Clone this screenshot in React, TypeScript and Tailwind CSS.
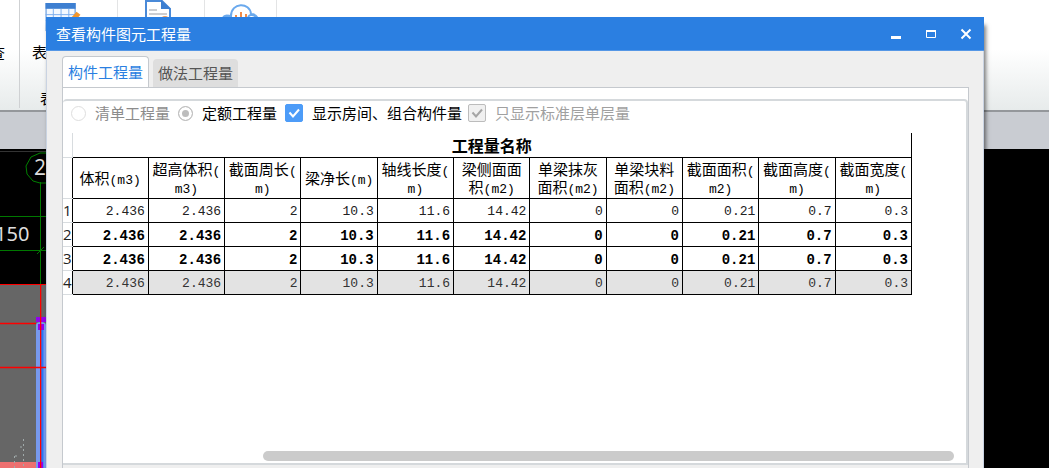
import { useState } from 'react'

const columns = [
  { lines: [['体积', '(m3)']], value: '2.436' },
  { lines: [['超高体积', '('], ['', 'm3)']], value: '2.436' },
  { lines: [['截面周长', '('], ['', 'm)']], value: '2' },
  { lines: [['梁净长', '(m)']], value: '10.3' },
  { lines: [['轴线长度', '('], ['', 'm)']], value: '11.6' },
  { lines: [['梁侧面面', ''], ['积', '(m2)']], value: '14.42' },
  { lines: [['单梁抹灰', ''], ['面积', '(m2)']], value: '0' },
  { lines: [['单梁块料', ''], ['面积', '(m2)']], value: '0' },
  { lines: [['截面面积', '('], ['', 'm2)']], value: '0.21' },
  { lines: [['截面高度', '('], ['', 'm)']], value: '0.7' },
  { lines: [['截面宽度', '('], ['', 'm)']], value: '0.3' },
]

const rows = [
  { id: 1, className: "text-[13px] text-[#222]" },
  { id: 2, className: "text-sm font-bold text-black" },
  { id: 3, className: "text-sm font-bold text-black" },
  { id: 4, className: "bg-[#e3e3e3] text-[13px] text-[#333]" },
]

function Ribbon() {
  return (
    <header className="relative h-28 overflow-hidden border-b-2 border-[#94979b] bg-linear-to-b from-white from-45% to-[#e7ebeb] text-[15px] leading-5 text-black">
      <div className="flex h-27 items-stretch">
        <div className="flex w-5 shrink-0 justify-end border-r border-[#cfd1d3] pt-[43px] pr-3.5">查</div>
        <div className="flex w-[98px] shrink-0 flex-col border-r border-[#e3e4e5] pl-3">
          <svg className="mt-[3px] ml-[13px] h-8 w-9" viewBox="0 0 36 32" fill="none">
            <rect x="0.5" y="0.5" width="30" height="28" fill="#f4f9ff" stroke="#4a8ad8" />
            <path d="M0 0h31v6H0z" fill="#3d7fd1" />
            <path d="M0 12h31M0 18h31M8 6v22M16 6v22M24 6v22" stroke="#7db0ee" />
            <path d="M22 20l10-11 4 3-9 11z" fill="#f0962e" />
          </svg>
          <span className="mt-2">表</span>
          <span className="mt-[26px] ml-2">表</span>
        </div>
        <div className="w-[87px] shrink-0 border-r border-[#e3e4e5] pl-[27px]">
          <svg className="h-8 w-7" viewBox="0 0 28 32" fill="none">
            <path d="M1 1h16l8 8v22H1z" fill="#fff" stroke="#4a8ad8" strokeWidth="2" />
            <path d="M16 0l10 9H16z" fill="#3d7fd1" />
            <path d="M4 10h8M4 14h18M4 18h10" stroke="#9a9da3" />
            <circle cx="20" cy="20" r="4" fill="#f29b55" />
          </svg>
        </div>
        <div className="w-[72px] shrink-0 border-r border-[#e3e4e5] pl-4">
          <svg className="mt-1 h-7 w-10" viewBox="0 0 40 28" fill="none">
            <path d="M10 12C10-2 29-2 30 10c6 0 9 6 7 12H2C0 14 4 11 10 12z" stroke="#6aa9ed" strokeWidth="2" />
            <path d="M2 13c4-3 9-1 10 4M27 13c2-3 6-2 8 0" stroke="#6aa9ed" strokeWidth="2" />
            <path d="M15 11v12M20 8v15M25 10v13" stroke="#f18b48" strokeWidth="2" />
          </svg>
        </div>
      </div>
    </header>
  )
}

function Drawing() {
  return (
    <svg className="block h-[319px] w-[46px]" viewBox="0 149 46 319" fill="none">
      <path d="M0 285h46v183H0z" fill="#666" />
      <path d="M0 151.5h46" stroke="#333" />
      <path d="M0 216.5h46M0 250.5h46M40.5 182v102M37 254l7-7" stroke="#007800" />
      <path d="M46 153h-6l-9 4-5 9 1 8 6 7 7 2h6" stroke="#008000" />
      <text x="34" y="175" fill="#ddd" fontSize="21" fontFamily="'Open Sans', sans-serif">2</text>
      <text x="-5" y="241" fill="#ddd" fontSize="20" fontFamily="'Noto Sans', sans-serif">150</text>
      <path d="M0 462h46v6H0z" fill="#ee7070" />
      <path d="M36 468V325q0-3 5-3t5 3v143z" fill="#7799ed" />
      <path d="M42 324v144" stroke="#2878f8" strokeWidth="3" />
      <path d="M36 317h10v5H36zM38 324h6v6h-6zM38 462h5v6h-5z" fill="#9500f0" />
      <path d="M0 284h46v1H0zM0 322.7h36v1.5H0zM0 366.7h46v1.5H0zM40 285h1.3v183H40z" fill="#ff0000" />
      <path d="M14.5 456v12M23.5 439v29M20 447h3M17 456h-3" stroke="#a0aaaa" strokeDasharray="2 3" />
    </svg>
  )
}

function Radio({ label, checked, onChange }: { label: string; checked: boolean; onChange?: () => void }) {
  return (
    <label className={checked ? "flex items-center gap-[9px] text-black" : "flex items-center gap-[9px] text-[#8c8c8c]"}>
      <input
        type="radio"
        name="quantity"
        checked={checked}
        onChange={onChange}
        className="size-[15px] appearance-none rounded-full border border-[#dedede] bg-white checked:border-[#bdbdbd] checked:bg-[#bdbdbd] checked:shadow-[inset_0_0_0_3px_#fff]"
      />
      {label}
    </label>
  )
}

function Check({ label, disabled }: { label: string; disabled?: boolean }) {
  return (
    <label className={disabled ? "flex items-center gap-[9px] text-[#a0a0a0]" : "flex items-center gap-[9px] text-black"}>
      <span className="relative flex">
        <input
          type="checkbox"
          defaultChecked
          disabled={disabled}
          className="peer size-[18px] appearance-none rounded-xs border border-[#4d9cf8] bg-white checked:bg-[#4d9cf8] disabled:border-[#bcbcbc] disabled:bg-[#f0f0f0]"
        />
        <svg className="pointer-events-none absolute inset-0 hidden text-white peer-checked:block peer-disabled:text-[#a5a5a5]" viewBox="0 0 18 18" fill="none">
          <path d="M4.5 8.5l3.5 4 6-7" stroke="currentColor" strokeWidth="2" />
        </svg>
      </span>
      {label}
    </label>
  )
}

function QuantityTable() {
  return (
    <table className="w-full table-fixed border-collapse text-black">
      <colgroup>
        <col className="w-[9px]" />
        {columns.map((_, i) => <col key={i} />)}
      </colgroup>
      <thead>
        <tr className="h-6">
          <td className="border-r border-b border-[#d8dcdf]"></td>
          <th colSpan={11} className="border-r border-b border-black p-0 text-base leading-5 font-bold">工程量名称</th>
        </tr>
        <tr className="h-[41px]">
          <td className="border-r border-b border-r-black border-b-[#d8dcdf]"></td>
          {columns.map((col, i) => (
            <th key={i} className="border border-black p-0 text-[15px] leading-[18px] font-normal">
              {col.lines.map(([name, unit], j) => (
                <div key={j} className="whitespace-nowrap">
                  {name}
                  <span className="font-['Liberation_Mono',monospace] text-[13px] leading-none">{unit}</span>
                </div>
              ))}
            </th>
          ))}
        </tr>
      </thead>
      <tbody>
        {rows.map(row => (
          <tr key={row.id} className={row.className + " h-6"}>
            <th className="border-b border-[#d8dcdf] bg-white p-0 text-left font-['Open_Sans',sans-serif] text-[15px] leading-5 font-normal text-[#222]">{row.id}</th>
            {columns.map((col, i) => (
              <td key={i} className="border border-black pt-1 pr-[3px] pb-0 pl-0 text-right font-['Liberation_Mono',monospace] leading-4">{col.value}</td>
            ))}
          </tr>
        ))}
      </tbody>
    </table>
  )
}

export default function App() {
  const [tab, setTab] = useState(0)
  const [mode, setMode] = useState(1)
  const active = "-mb-px h-8 rounded-t border border-b-0 border-[#c5c9ce] bg-white px-[5px] pb-px text-[#2b7fe1]"
  const inactive = "h-7 rounded-t bg-[#dedede] px-[5px] text-[#555]"
  return (
    <div className="relative flex min-h-screen flex-col overflow-hidden bg-black font-['Noto_Sans_CJK_SC',sans-serif]">
      <Ribbon />
      <div className="h-[37px] bg-[#c9ccd2]"></div>
      <Drawing />

      <section className="absolute top-[17px] right-[65px] bottom-0 left-[46px] flex flex-col bg-[#efefef] text-[15px] leading-5 shadow-[2px_8px_4px_rgba(0,0,0,0.5)]">
        <div className="flex h-[34px] shrink-0 items-center justify-between border-b border-[#5597e6] bg-[#2b7fe1] pr-2.5 pl-2.5 text-white">
          <h1>查看构件图元工程量</h1>
          <div className="flex items-center gap-[19px]">
            <button aria-label="最小化" className="size-4">
              <svg viewBox="0 0 16 16" fill="none"><path d="M3 11.5h10" stroke="currentColor" strokeWidth="3" /></svg>
            </button>
            <button aria-label="最大化" className="size-4">
              <svg viewBox="0 0 16 16" fill="none">
                <path d="M3.5 4.5h9v7h-9z" stroke="currentColor" />
                <path d="M3 5h10" stroke="currentColor" strokeWidth="2" />
              </svg>
            </button>
            <button aria-label="关闭" className="size-4">
              <svg viewBox="0 0 16 16" fill="none"><path d="M3.5 3.5l9 9M12.5 3.5l-9 9" stroke="currentColor" strokeWidth="2" /></svg>
            </button>
          </div>
        </div>

        <div className="flex min-h-0 flex-1 flex-col border-x border-[#c9d3e2] pt-[5px] pr-3.5 pl-[15px]">
          <div className="flex items-end gap-1">
            <button onClick={() => setTab(0)} className={tab === 0 ? active : inactive}>构件工程量</button>
            <button onClick={() => setTab(1)} className={tab === 1 ? active : inactive}>做法工程量</button>
          </div>
          <div className="flex min-h-0 flex-1 flex-col border-x border-t border-[#c5c9ce] bg-white pt-[11px]">
            <div className="flex min-h-0 flex-1 flex-col rounded-t border-t-2 border-r-2 border-b-2 border-[#d5d9dc]">
              <div className="flex items-center gap-2 pt-0.5 pl-2">
                <div className="flex gap-2">
                  <Radio label="清单工程量" checked={mode === 0} onChange={() => setMode(0)} />
                  <Radio label="定额工程量" checked={mode === 1} onChange={() => setMode(1)} />
                </div>
                <div className="flex gap-1.5">
                  <Check label="显示房间、组合构件量" />
                  <Check label="只显示标准层单层量" disabled />
                </div>
              </div>
              <div className="pt-2.5 pr-[54px]">
                <QuantityTable />
              </div>
              <div className="mt-auto mr-3 mb-0.5 ml-50 h-2.5 rounded-full bg-[#cbcbcb]"></div>
            </div>
            <div className="h-[3px] bg-[#efefef]"></div>
          </div>
        </div>
      </section>
    </div>
  )
}
